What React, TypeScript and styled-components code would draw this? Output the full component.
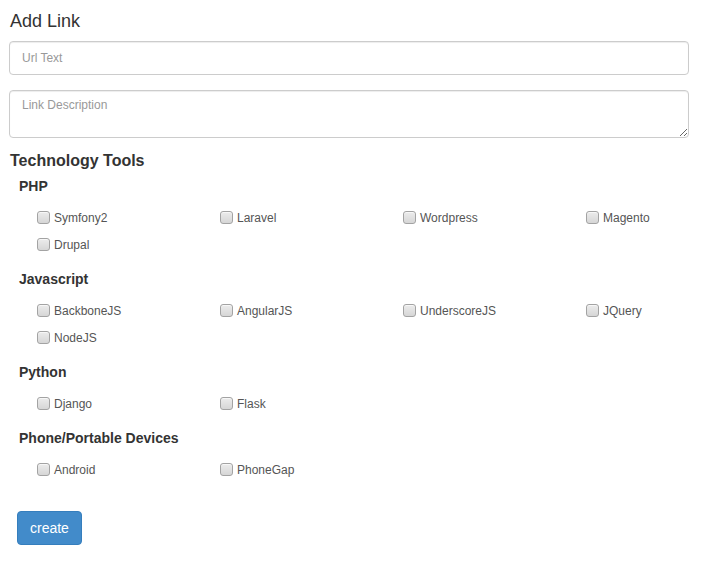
import React from "react";
import styled, { createGlobalStyle } from "styled-components";

const GlobalStyle = createGlobalStyle`
  html, body {
    margin: 0;
    padding: 0;
    background: #fff;
  }
  body {
    font-family: "Liberation Sans", Arial, sans-serif;
    font-size: 14px;
    color: #333;
  }
  * { box-sizing: border-box; }
`;

const Page = styled.div`
  padding: 10px 12px 0 9px;
`;

const Title = styled.h4`
  margin: 0 0 9px 1px;
  font-size: 18px;
  font-weight: 400;
  line-height: 22px;
  color: #333;
`;

const FormGroup = styled.div<{ $gap: number }>`
  margin-bottom: ${(p) => p.$gap}px;
`;

const fieldBase = `
  display: block;
  width: 100%;
  padding: 6px 12px;
  font-family: "Liberation Sans", Arial, sans-serif;
  font-size: 12px;
  line-height: 1.428571;
  color: #555;
  background: #fff;
  border: 1px solid #ccc;
  border-radius: 4px;
  box-shadow: inset 0 1px 1px rgba(0, 0, 0, 0.075);
  outline: none;
  &::placeholder { color: #999; }
`;

const TextInput = styled.input`
  ${fieldBase}
  height: 34px;
`;

const TextArea = styled.textarea`
  ${fieldBase}
  height: 48px;
  resize: vertical;
`;

const SectionTitle = styled.h3`
  margin: 0 0 5px 1px;
  font-size: 16px;
  font-weight: 700;
  line-height: 20px;
  color: #333;
`;

const Group = styled.div`
  padding-left: 10px;
  margin-bottom: 10px;
`;

const GroupTitle = styled.h5`
  margin: 0 0 9px 0;
  font-size: 14px;
  font-weight: 700;
  line-height: 20px;
  color: #333;
`;

const Options = styled.div`
  padding-left: 18px;
  display: grid;
  grid-template-columns: 183px 183px 183px minmax(0, 1fr);
  grid-auto-rows: 27px;
`;

const Option = styled.label`
  display: flex;
  align-items: center;
  gap: 4px;
  font-size: 12px;
  line-height: 17px;
  color: #555;
  cursor: pointer;
  white-space: nowrap;
`;

const Check = styled.input.attrs({ type: "checkbox" })`
  appearance: none;
  -webkit-appearance: none;
  margin: 0 0 3px 0;
  width: 13px;
  height: 13px;
  flex: none;
  border: 1px solid #a3a3a3;
  border-radius: 3px;
  background: linear-gradient(#ececec, #d6d6d6);
  box-shadow: inset 0 1px 0 rgba(255, 255, 255, 0.6);
  &:checked {
    background: linear-gradient(#d8e8f7, #b9d3ee);
  }
`;

const Actions = styled.div`
  padding-left: 8px;
  margin-top: 27px;
`;

const Button = styled.button`
  display: inline-block;
  padding: 6px 12px;
  font-family: "Liberation Sans", Arial, sans-serif;
  font-size: 14px;
  line-height: 20px;
  color: #fff;
  background: #428bca;
  border: 1px solid #357ebd;
  border-radius: 4px;
  cursor: pointer;
`;

const groups: { name: string; items: string[] }[] = [
  { name: "PHP", items: ["Symfony2", "Laravel", "Wordpress", "Magento", "Drupal"] },
  { name: "Javascript", items: ["BackboneJS", "AngularJS", "UnderscoreJS", "JQuery", "NodeJS"] },
  { name: "Python", items: ["Django", "Flask"] },
  { name: "Phone/Portable Devices", items: ["Android", "PhoneGap"] },
];

export default function App() {
  return (
    <>
      <GlobalStyle />
      <Page>
        <Title>Add Link</Title>
        <FormGroup $gap={15}>
          <TextInput placeholder="Url Text" />
        </FormGroup>
        <FormGroup $gap={13}>
          <TextArea placeholder="Link Description" />
        </FormGroup>
        <SectionTitle>Technology Tools</SectionTitle>
        {groups.map((g) => (
          <Group key={g.name}>
            <GroupTitle>{g.name}</GroupTitle>
            <Options>
              {g.items.map((it) => (
                <Option key={it}>
                  <Check />
                  {it}
                </Option>
              ))}
            </Options>
          </Group>
        ))}
        <Actions>
          <Button>create</Button>
        </Actions>
      </Page>
    </>
  );
}
